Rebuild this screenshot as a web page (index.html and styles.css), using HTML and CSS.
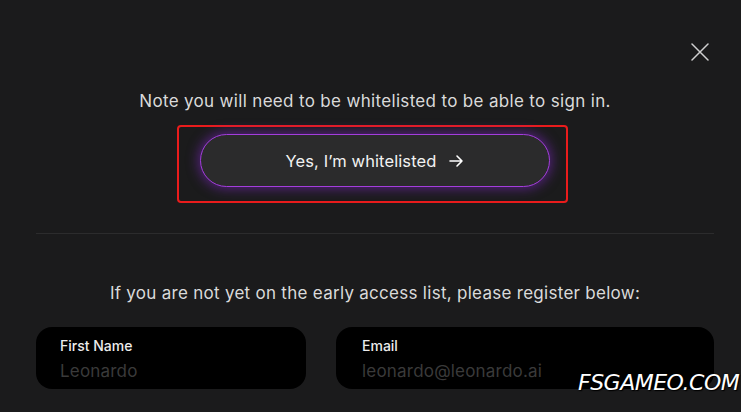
FILE: index.html
```html
<!DOCTYPE html>
<html>
<head>
<meta charset="utf-8">
<link rel="stylesheet" href="styles.css">
</head>
<body>
<div class="modal">
  <div class="top">
    <button class="close" aria-label="Close">
      <svg width="18" height="18" viewBox="0 0 18 18"><path d="M1 1L17 17M17 1L1 17" stroke="#d0d0d0" stroke-width="1.5" stroke-linecap="round"/></svg>
    </button>
  </div>
  <p class="note">Note you will need to be whitelisted to be able to sign in.</p>
  <div class="highlight">
    <button class="cta">Yes, I’m whitelisted
      <svg width="16" height="16" viewBox="0 0 16 16"><path d="M2 8H14M9 3L14 8L9 13" fill="none" stroke="#ffffff" stroke-width="1.6" stroke-linecap="round" stroke-linejoin="round"/></svg>
    </button>
  </div>
  <hr class="divider">
  <p class="note second">If you are not yet on the early access list, please register below:</p>
  <div class="fields">
    <label class="field"><span class="label">First Name</span><span class="ph">Leonardo</span></label>
    <label class="field"><span class="label">Email</span><span class="ph">leonardo@leonardo.ai</span></label>
  </div>
  <div class="watermark">FSGAMEO.COM</div>
</div>
</body>
</html>
```
FILE: styles.css
```css
html, body {
  margin: 0;
  padding: 0;
  background: #1b1b1c;
  width: 741px;
  height: 412px;
  overflow: hidden;
}
body {
  font-family: "Inter", "Noto Sans", sans-serif;
  color: #e0e0e0;
}
.modal {
  position: relative;
  padding: 0 27px 0 36px;
  height: 412px;
  box-sizing: border-box;
}
.top {
  display: flex;
  justify-content: flex-end;
  padding-top: 43px;
  padding-right: 5px;
  height: 18px;
}
.close {
  background: none;
  border: 0;
  padding: 0;
  width: 18px;
  height: 18px;
  display: block;
}
.note {
  margin: 27px 0 0;
  text-align: center;
  font-size: 17px;
  letter-spacing: 0.33px;
  color: #dadada;
  line-height: 26px;
}
.highlight {
  width: 350px;
  height: 53px;
  margin: 11px 0 0 141px;
  padding: 7px 16px 14px 21px;
  border: 2px solid #ea1c1c;
  border-radius: 4px;
  display: flex;
}
.cta {
  width: 350px;
  height: 53px;
  border-radius: 27px;
  border: 1px solid #a43ddd;
  background: #2b2b2c;
  box-shadow: 0 0 12px 2px rgba(130, 40, 200, 0.55);
  color: #f2f2f2;
  font-family: inherit;
  font-size: 16.5px;
  letter-spacing: 0.1px;
  display: flex;
  align-items: center;
  justify-content: center;
  gap: 12px;
  padding: 0;
}
.divider {
  border: 0;
  border-top: 1px solid #2c2c2d;
  margin: 30px 0 0;
}
.second {
  margin-top: 46px;
  letter-spacing: 0.28px;
}
.fields {
  display: grid;
  grid-template-columns: 270px 378px;
  gap: 30px;
  margin-top: 21px;
}
.field {
  background: #000;
  border-radius: 16px;
  height: 62px;
  display: flex;
  flex-direction: column;
  padding: 11px 24px 0;
  box-sizing: border-box;
}
.field + .field {
  padding-left: 26px;
}
.label {
  font-size: 14px;
  font-weight: 500;
  color: #ececec;
  line-height: 16px;
}
.ph {
  margin-top: 7px;
  font-size: 17px;
  letter-spacing: 0.2px;
  color: #3a3a3a;
  line-height: 20px;
}
.watermark {
  position: absolute;
  left: 578px;
  top: 370px;
  font-family: "DejaVu Sans", sans-serif;
  font-style: italic;
  font-size: 22px;
  letter-spacing: -0.5px;
  color: #fff;
  text-shadow: 0 0 2px #000, 1px 1px 1px #000;
}
```
